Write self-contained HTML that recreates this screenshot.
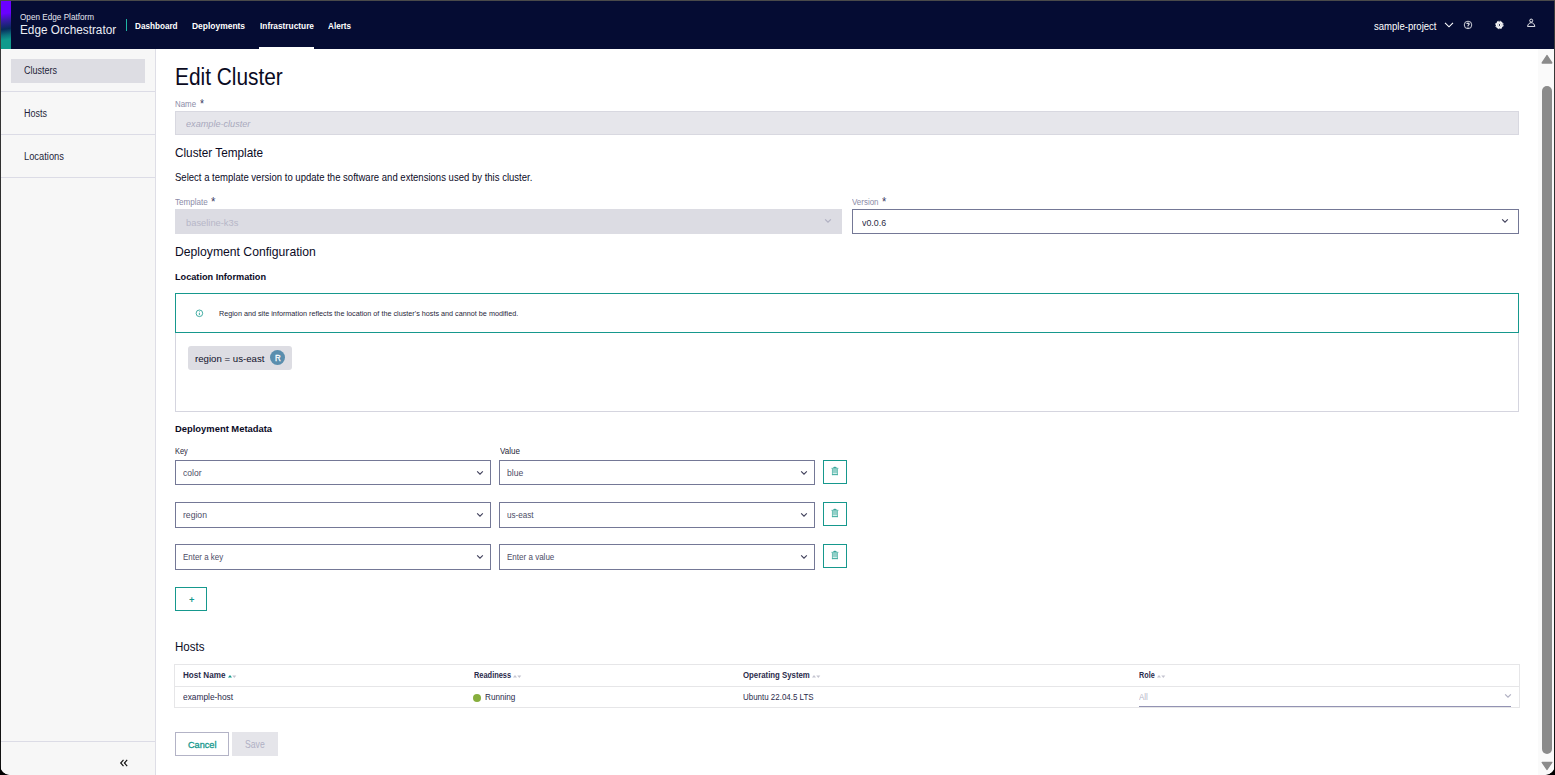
<!DOCTYPE html>
<html><head><meta charset="utf-8"><title>Edit Cluster</title>
<style>
*{box-sizing:border-box;margin:0;padding:0}
html,body{width:1555px;height:775px;overflow:hidden;background:#000;font-family:"Liberation Sans",sans-serif;color:#000}
#win{position:absolute;left:0;top:0;width:1555px;height:775px;background:linear-gradient(180deg,#3c3c3c 0%,#222 50%,#111 100%);overflow:hidden;border-radius:0 0 10px 10px}
#page{position:absolute;left:1px;top:1px;width:1553px;height:774px;background:#fff;overflow:hidden;border-radius:0 0 9px 9px}
#topline{position:absolute;left:0;top:0;width:1555px;height:1px;background:#4a4a4a}
.b{position:absolute}
.t{position:absolute;white-space:nowrap;transform-origin:0 0}
.sel{position:absolute;border:1px solid #747896;background:#fff}
.tr{position:absolute;width:24px;height:24px;border:1px solid #16988d;background:#fff}
.sep{position:absolute;left:1px;width:154px;height:1px;background:#dcdce6}
svg{position:absolute;overflow:visible}
</style></head><body>
<div id="win"><div id="page"></div><div id="topline"></div>
<!-- header -->
<div class="b" style="left:1px;top:1px;width:1553px;height:48px;background:#050c33"></div>
<div class="b" style="left:1px;top:1px;width:10px;height:48px;background:linear-gradient(172deg,#6a00ff 0%,#6a00ff 26%,#3a1aa8 40%,#082a5c 58%,#0c6f7c 70%,#109a8c 80%,#109a8c 100%)"></div>
<div class="b" style="left:126px;top:19px;width:1px;height:12px;background:#1fb5a6"></div>
<div class="b" style="left:259px;top:47px;width:55px;height:2px;background:#fff"></div>
<!-- header icons -->
<svg style="left:1444px;top:21px" width="10" height="8" viewBox="0 0 10 8"><path d="M1 1.8 L5 5.8 L9 1.8" fill="none" stroke="#fff" stroke-width="1.1"/></svg>
<svg style="left:1463px;top:20px" width="10" height="10" viewBox="0 0 10 10"><circle cx="5" cy="4.95" r="3.75" fill="none" stroke="#fff" stroke-width="0.8"/><path d="M3.85 4 C3.85 2.7 6.15 2.7 6.15 4 C6.15 4.9 5 4.9 5 5.9" fill="none" stroke="#fff" stroke-width="1.05"/><circle cx="5" cy="7.05" r="0.62" fill="#fff"/></svg>
<svg style="left:1494px;top:20px" width="10" height="10" viewBox="0 0 10 10"><circle cx="5.4" cy="4.95" r="3.75" fill="none" stroke="#fff" stroke-width="0.95" stroke-dasharray="1.7 1.245"/><circle cx="5.4" cy="4.95" r="3.45" fill="#fff"/><circle cx="5.4" cy="4.95" r="2.05" fill="none" stroke="#050c33" stroke-width="0.4" opacity="0.45"/><ellipse cx="5.4" cy="4.95" rx="0.6" ry="1.05" fill="#050c33"/></svg>
<svg style="left:1526px;top:18px" width="10" height="10" viewBox="0 0 10 10"><path d="M1.55 8.45 C1.9 6.2 3.4 4.7 5.2 4.7 C7 4.7 8.5 6.2 8.85 8.45 Z" fill="none" stroke="#fff" stroke-width="0.9" stroke-linejoin="round"/><circle cx="5.2" cy="2.6" r="1.5" fill="#050c33" stroke="#fff" stroke-width="0.9"/></svg>
<!-- sidebar -->
<div class="b" style="left:1px;top:49px;width:154px;height:726px;background:#f7f7f7"></div>
<div class="b" style="left:155px;top:49px;width:1px;height:726px;background:#dedee6"></div>
<div class="b" style="left:11px;top:59px;width:134px;height:24px;background:#dddde3"></div>
<div class="sep" style="top:91px"></div><div class="sep" style="top:134px"></div><div class="sep" style="top:177px"></div><div class="sep" style="top:741px"></div>
<svg style="left:119px;top:758px" width="10" height="10" viewBox="0 0 10 10"><path d="M4.5 1.8 L1.7 5 L4.5 8.2 M8.2 1.8 L5.4 5 L8.2 8.2" fill="none" stroke="#111" stroke-width="1.15"/></svg>
<!-- name input -->
<div class="b" style="left:175px;top:111px;width:1344px;height:24px;background:#e6e6eb;border:1px solid #d8d8e0"></div>
<!-- template select -->
<div class="b" style="left:175px;top:209px;width:667px;height:25px;background:#dcdce3"></div>
<svg style="left:824px;top:218px" width="8" height="6" viewBox="0 0 8 6"><path d="M1.15 1.3 L4 4.15 L6.85 1.3" fill="none" stroke="#b0b0c2" stroke-width="1.2"/></svg>
<div class="sel" style="left:852px;top:209px;width:667px;height:25px"></div>
<svg style="left:1501px;top:218px" width="8" height="6" viewBox="0 0 8 6"><path d="M1.15 1.3 L4 4.15 L6.85 1.3" fill="none" stroke="#3f3f5a" stroke-width="1.12"/></svg>
<!-- info box -->
<div class="b" style="left:175px;top:333px;width:1344px;height:79px;border:1px solid #d5d5df;border-top:none"></div>
<div class="b" style="left:175px;top:293px;width:1344px;height:40px;border:1px solid #16988d;background:#fff"></div>
<svg style="left:195px;top:309px" width="9" height="9" viewBox="0 0 9 9"><circle cx="4.4" cy="4.3" r="3.3" fill="none" stroke="#16988d" stroke-width="0.8"/><path d="M4.4 3.9 V6.1" stroke="#16988d" stroke-width="0.8"/><circle cx="4.4" cy="2.7" r="0.45" fill="#16988d"/></svg>
<div class="b" style="left:188px;top:346px;width:104px;height:24px;border-radius:3px;background:#dddde3"></div>
<div class="b" style="left:270px;top:350px;width:15px;height:15px;border-radius:50%;background:#5a8eae"></div>
<!-- metadata rows -->
<div class="sel" style="left:175px;top:460px;width:316px;height:25px"></div>
<div class="sel" style="left:499px;top:460px;width:316px;height:25px"></div>
<div class="sel" style="left:175px;top:502px;width:316px;height:26px"></div>
<div class="sel" style="left:499px;top:502px;width:316px;height:26px"></div>
<div class="sel" style="left:175px;top:544px;width:316px;height:26px"></div>
<div class="sel" style="left:499px;top:544px;width:316px;height:26px"></div>
<svg style="left:476px;top:470px" width="8" height="6" viewBox="0 0 8 6"><path id="chv" d="M1.15 1.3 L4 4.15 L6.85 1.3" fill="none" stroke="#3f3f5a" stroke-width="1.12"/></svg>
<svg style="left:800px;top:470px" width="8" height="6" viewBox="0 0 8 6"><path d="M1.15 1.3 L4 4.15 L6.85 1.3" fill="none" stroke="#3f3f5a" stroke-width="1.12"/></svg>
<svg style="left:476px;top:512px" width="8" height="6" viewBox="0 0 8 6"><path d="M1.15 1.3 L4 4.15 L6.85 1.3" fill="none" stroke="#3f3f5a" stroke-width="1.12"/></svg>
<svg style="left:800px;top:512px" width="8" height="6" viewBox="0 0 8 6"><path d="M1.15 1.3 L4 4.15 L6.85 1.3" fill="none" stroke="#3f3f5a" stroke-width="1.12"/></svg>
<svg style="left:476px;top:554px" width="8" height="6" viewBox="0 0 8 6"><path d="M1.15 1.3 L4 4.15 L6.85 1.3" fill="none" stroke="#3f3f5a" stroke-width="1.12"/></svg>
<svg style="left:800px;top:554px" width="8" height="6" viewBox="0 0 8 6"><path d="M1.15 1.3 L4 4.15 L6.85 1.3" fill="none" stroke="#3f3f5a" stroke-width="1.12"/></svg>
<div class="tr" style="left:823px;top:460px"></div>
<div class="tr" style="left:823px;top:502px"></div>
<div class="tr" style="left:823px;top:544px"></div>
<svg style="left:831px;top:466px" width="8" height="10" viewBox="0 0 8 10"><rect x="0.95" y="2.4" width="5.9" height="6.7" fill="#93d1c9"/><rect x="0.95" y="2.4" width="1" height="6.7" fill="#6ec0b6"/><rect x="5.85" y="2.4" width="1" height="6.7" fill="#6ec0b6"/><rect x="0.35" y="1.85" width="7.1" height="0.8" fill="#5ab7ac"/><ellipse cx="3.9" cy="1.35" rx="1.9" ry="0.7" fill="#2c9f93"/><rect x="1.9" y="6.95" width="4" height="0.8" fill="#eaf7f5"/><rect x="0.95" y="8.2" width="5.9" height="0.9" fill="#3fab9f"/></svg>
<svg style="left:831px;top:508px" width="8" height="10" viewBox="0 0 8 10"><rect x="0.95" y="2.4" width="5.9" height="6.7" fill="#93d1c9"/><rect x="0.95" y="2.4" width="1" height="6.7" fill="#6ec0b6"/><rect x="5.85" y="2.4" width="1" height="6.7" fill="#6ec0b6"/><rect x="0.35" y="1.85" width="7.1" height="0.8" fill="#5ab7ac"/><ellipse cx="3.9" cy="1.35" rx="1.9" ry="0.7" fill="#2c9f93"/><rect x="1.9" y="6.95" width="4" height="0.8" fill="#eaf7f5"/><rect x="0.95" y="8.2" width="5.9" height="0.9" fill="#3fab9f"/></svg>
<svg style="left:831px;top:550px" width="8" height="10" viewBox="0 0 8 10"><rect x="0.95" y="2.4" width="5.9" height="6.7" fill="#93d1c9"/><rect x="0.95" y="2.4" width="1" height="6.7" fill="#6ec0b6"/><rect x="5.85" y="2.4" width="1" height="6.7" fill="#6ec0b6"/><rect x="0.35" y="1.85" width="7.1" height="0.8" fill="#5ab7ac"/><ellipse cx="3.9" cy="1.35" rx="1.9" ry="0.7" fill="#2c9f93"/><rect x="1.9" y="6.95" width="4" height="0.8" fill="#eaf7f5"/><rect x="0.95" y="8.2" width="5.9" height="0.9" fill="#3fab9f"/></svg>
<!-- plus button -->
<div class="b" style="left:175px;top:587px;width:32px;height:24px;border:1px solid #16988d;background:#fff"></div>
<!-- table -->
<div class="b" style="left:174px;top:664px;width:1346px;height:44px;border:1px solid #e6e6e8;background:#fff"></div>
<div class="b" style="left:175px;top:686px;width:1344px;height:1px;background:#e6e6e8"></div>
<div class="b" style="left:473px;top:693.5px;width:8px;height:8px;border-radius:50%;background:#87ae3d"></div>
<svg style="left:228px;top:674px" width="9" height="5" viewBox="0 0 9 5"><path d="M0 3.6 L2 0.9 L4 3.6 Z" fill="#16988d"/><path d="M4.3 1.6 L8.3 1.6 L6.3 4 Z" fill="#c4c4d0"/></svg>
<svg style="left:513px;top:674px" width="9" height="5" viewBox="0 0 9 5"><path d="M0 3.6 L2 0.9 L4 3.6 Z" fill="#c4c4d0"/><path d="M4.3 1.6 L8.3 1.6 L6.3 4 Z" fill="#c4c4d0"/></svg>
<svg style="left:812px;top:674px" width="9" height="5" viewBox="0 0 9 5"><path d="M0 3.6 L2 0.9 L4 3.6 Z" fill="#c4c4d0"/><path d="M4.3 1.6 L8.3 1.6 L6.3 4 Z" fill="#c4c4d0"/></svg>
<svg style="left:1157px;top:674px" width="9" height="5" viewBox="0 0 9 5"><path d="M0 3.6 L2 0.9 L4 3.6 Z" fill="#c4c4d0"/><path d="M4.3 1.6 L8.3 1.6 L6.3 4 Z" fill="#c4c4d0"/></svg>
<div class="b" style="left:1139px;top:706px;width:372px;height:1px;background:#9393b3"></div>
<svg style="left:1504px;top:693px" width="8" height="6" viewBox="0 0 8 6"><path d="M1.15 1.3 L4 4.15 L6.85 1.3" fill="none" stroke="#b0b0c2" stroke-width="1.2"/></svg>
<!-- buttons -->
<div class="b" style="left:175px;top:732px;width:54px;height:24px;border:1px solid #b3b3c6;background:#fff"></div>
<div class="b" style="left:232px;top:732px;width:46px;height:24px;background:#e5e5ea"></div>
<!-- scrollbar -->
<div class="b" style="left:1538px;top:49px;width:16px;height:726px;background:#fafafa"></div>
<svg style="left:1541px;top:54px" width="12" height="10" viewBox="0 0 12 10"><path d="M6 1.6 L10.8 9.0 H1.2 Z" fill="#8b8b8b" stroke="#8b8b8b" stroke-width="1.4" stroke-linejoin="round"/></svg>
<div class="b" style="left:1542px;top:86px;width:10px;height:668px;border-radius:5px;background:#8b8b8b"></div>
<svg style="left:1541px;top:761px" width="12" height="10" viewBox="0 0 12 10"><path d="M6 8.4 L10.8 1.4 H1.2 Z" fill="#8b8b8b" stroke="#8b8b8b" stroke-width="1.4" stroke-linejoin="round"/></svg>
<div class="t" style="left:20.00px;top:13px;font-size:8.8px;line-height:8.8px;color:#e4e6f0;transform:scaleX(0.9300)">Open Edge Platform</div>
<div class="t" style="left:20.30px;top:24px;font-size:12px;line-height:12px;color:#eceef5;transform:scaleX(0.9806)">Edge Orchestrator</div>
<div class="t" style="left:134.70px;top:22px;font-size:8.6px;line-height:8.6px;color:#fff;transform:scaleX(0.9489);font-weight:700">Dashboard</div>
<div class="t" style="left:191.90px;top:22px;font-size:8.6px;line-height:8.6px;color:#fff;transform:scaleX(0.9833);font-weight:700">Deployments</div>
<div class="t" style="left:259.70px;top:22px;font-size:8.6px;line-height:8.6px;color:#fff;transform:scaleX(0.9661);font-weight:700">Infrastructure</div>
<div class="t" style="left:328.30px;top:22px;font-size:8.6px;line-height:8.6px;color:#fff;transform:scaleX(0.9480);font-weight:700">Alerts</div>
<div class="t" style="left:1374.20px;top:22px;font-size:10px;line-height:10px;color:#fff;transform:scaleX(0.9530)">sample-project</div>
<div class="t" style="left:23.70px;top:66px;font-size:10px;line-height:10px;color:#1f1f3a;transform:scaleX(0.9027)">Clusters</div>
<div class="t" style="left:23.70px;top:109px;font-size:10px;line-height:10px;color:#1f1f3a;transform:scaleX(0.8962)">Hosts</div>
<div class="t" style="left:23.70px;top:152px;font-size:10px;line-height:10px;color:#1f1f3a;transform:scaleX(0.9326)">Locations</div>
<div class="t" style="left:175.09px;top:66px;font-size:23px;line-height:23px;color:#0b0b1f;transform:scaleX(0.9068)">Edit Cluster</div>
<div class="t" style="left:175.20px;top:100px;font-size:8.4px;line-height:8.4px;color:#8b8ba7;transform:scaleX(0.9435)">Name</div>
<div class="t" style="left:199.70px;top:98px;font-size:12px;line-height:12px;color:#3b3b63;transform:scaleX(0.8600)">*</div>
<div class="t" style="left:185.70px;top:119px;font-size:9.5px;line-height:9.5px;color:#a9a9bd;transform:scaleX(0.9603);font-style:italic">example-cluster</div>
<div class="t" style="left:175.00px;top:146px;font-size:13px;line-height:13px;color:#0b0b1f;transform:scaleX(0.9052)">Cluster Template</div>
<div class="t" style="left:175.00px;top:172px;font-size:10.5px;line-height:10.5px;color:#0b0b1f;transform:scaleX(0.9084)">Select a template version to update the software and extensions used by this cluster.</div>
<div class="t" style="left:175.20px;top:198px;font-size:8.4px;line-height:8.4px;color:#8b8ba7;transform:scaleX(0.9647)">Template</div>
<div class="t" style="left:211.30px;top:196px;font-size:12px;line-height:12px;color:#3b3b63;transform:scaleX(0.9400)">*</div>
<div class="t" style="left:185.80px;top:219px;font-size:9.3px;line-height:9.3px;color:#b7b7c8;transform:scaleX(1.0038)">baseline-k3s</div>
<div class="t" style="left:851.80px;top:198px;font-size:8.4px;line-height:8.4px;color:#8b8ba7;transform:scaleX(0.9500)">Version</div>
<div class="t" style="left:881.70px;top:196px;font-size:12px;line-height:12px;color:#3b3b63;transform:scaleX(0.9200)">*</div>
<div class="t" style="left:862.20px;top:219px;font-size:9.2px;line-height:9.2px;color:#2b2b45;transform:scaleX(0.9640)">v0.0.6</div>
<div class="t" style="left:175.00px;top:245px;font-size:13px;line-height:13px;color:#0b0b1f;transform:scaleX(0.9367)">Deployment Configuration</div>
<div class="t" style="left:175.00px;top:272px;font-size:9.6px;line-height:9.6px;color:#0b0b1f;transform:scaleX(0.9542);font-weight:700">Location Information</div>
<div class="t" style="left:218.90px;top:310px;font-size:8px;line-height:8px;color:#1f1f3a;transform:scaleX(0.9039)">Region and site information reflects the location of the cluster's hosts and cannot be modified.</div>
<div class="t" style="left:195.10px;top:354px;font-size:9.8px;line-height:9.8px;color:#10102a;transform:scaleX(0.9845)">region = us-east</div>
<div class="t" style="left:274.90px;top:354px;font-size:9.2px;line-height:9.2px;color:#fff;transform:scaleX(0.8714);-webkit-text-stroke:0.3px #fff">R</div>
<div class="t" style="left:175.10px;top:424px;font-size:9.6px;line-height:9.6px;color:#0b0b1f;transform:scaleX(0.9790);font-weight:700">Deployment Metadata</div>
<div class="t" style="left:175.00px;top:447px;font-size:8.5px;line-height:8.5px;color:#1f1f3a;transform:scaleX(0.8667)">Key</div>
<div class="t" style="left:500.30px;top:447px;font-size:8.5px;line-height:8.5px;color:#1f1f3a;transform:scaleX(0.9429)">Value</div>
<div class="t" style="left:182.80px;top:469px;font-size:9px;line-height:9px;color:#4c4c66;transform:scaleX(0.9500)">color</div>
<div class="t" style="left:507.00px;top:469px;font-size:9px;line-height:9px;color:#4c4c66;transform:scaleX(0.9529)">blue</div>
<div class="t" style="left:182.80px;top:511px;font-size:9px;line-height:9px;color:#4c4c66;transform:scaleX(0.9560)">region</div>
<div class="t" style="left:507.00px;top:511px;font-size:9px;line-height:9px;color:#4c4c66;transform:scaleX(0.9000)">us-east</div>
<div class="t" style="left:182.80px;top:553px;font-size:9px;line-height:9px;color:#4c4c66;transform:scaleX(0.8826)">Enter a key</div>
<div class="t" style="left:507.00px;top:553px;font-size:9px;line-height:9px;color:#4c4c66;transform:scaleX(0.8925)">Enter a value</div>
<div class="t" style="left:189.00px;top:596px;font-size:9px;line-height:9px;color:#16988d;transform:scaleX(1.0400);font-weight:700">+</div>
<div class="t" style="left:175.00px;top:641px;font-size:12.5px;line-height:12.5px;color:#0b0b1f;transform:scaleX(0.9250)">Hosts</div>
<div class="t" style="left:182.70px;top:671px;font-size:8.6px;line-height:8.6px;color:#2b2b4b;transform:scaleX(0.9444);font-weight:700">Host Name</div>
<div class="t" style="left:182.70px;top:693px;font-size:8.8px;line-height:8.8px;color:#2b2b4b;transform:scaleX(0.9491)">example-host</div>
<div class="t" style="left:473.80px;top:671px;font-size:8.6px;line-height:8.6px;color:#2b2b4b;transform:scaleX(0.8628);font-weight:700">Readiness</div>
<div class="t" style="left:484.60px;top:693px;font-size:8.8px;line-height:8.8px;color:#2b2b4b;transform:scaleX(0.9273)">Running</div>
<div class="t" style="left:742.70px;top:671px;font-size:8.6px;line-height:8.6px;color:#2b2b4b;transform:scaleX(0.9081);font-weight:700">Operating System</div>
<div class="t" style="left:742.70px;top:693px;font-size:8.8px;line-height:8.8px;color:#2b2b4b;transform:scaleX(0.9038)">Ubuntu 22.04.5 LTS</div>
<div class="t" style="left:1139.00px;top:671px;font-size:8.6px;line-height:8.6px;color:#2b2b4b;transform:scaleX(0.8421);font-weight:700">Role</div>
<div class="t" style="left:1139.00px;top:693px;font-size:8.8px;line-height:8.8px;color:#b5b5c8;transform:scaleX(0.9000)">All</div>
<div class="t" style="left:188.10px;top:740px;font-size:9.4px;line-height:9.4px;color:#16988d;transform:scaleX(0.9759);-webkit-text-stroke:0.3px #16988d">Cancel</div>
<div class="t" style="left:245.10px;top:740px;font-size:10.3px;line-height:10.3px;color:#b0b0c4;transform:scaleX(0.8417)">Save</div>
</div>
</body></html>
